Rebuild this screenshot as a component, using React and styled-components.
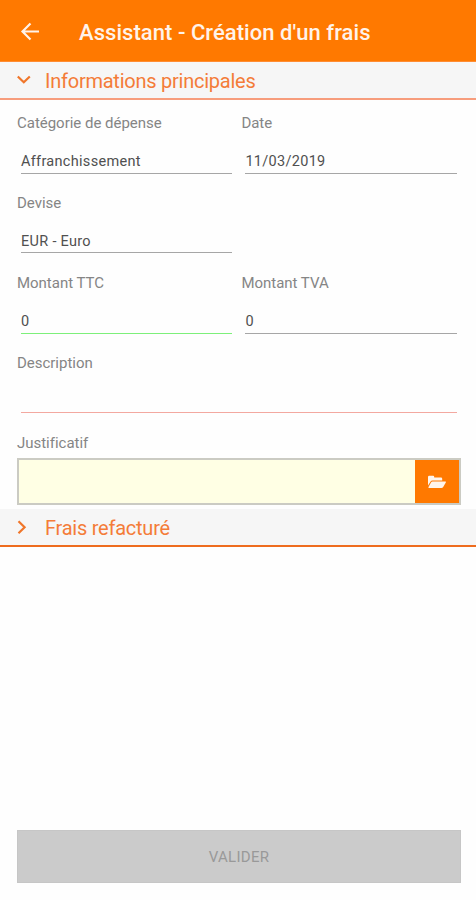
import React, { useState } from 'react'
import styled, { createGlobalStyle } from 'styled-components'

const GlobalStyle = createGlobalStyle`
    * {
        box-sizing: border-box;
    }

    body {
        margin: 0;
        background-color: #fff;
        font-family: Roboto, "Liberation Sans", sans-serif;
    }
`

const Container = styled.div`
    display: flex;
    flex-direction: column;
    height: 900px;
    width: 476px;
    background-color: #fefefe;
`

const Header = styled.header`
    display: flex;
    align-items: center;
    height: 62px;
    padding: 2px 0 0 18px;
    background-color: #ff7900;
    border-bottom: 1px solid #ff8d33;

    & button {
        display: flex;
        width: 24px;
        height: 24px;
        margin-right: 37px;
        padding: 0;
        border: none;
        background-color: transparent;
    }

    h1 {
        margin: 0;
        padding-top: 2px;
        font-size: 22px;
        font-weight: 500;
        line-height: 26px;
        letter-spacing: 0.05px;
        white-space: nowrap;
        color: #fff3ea;
    }
`

const SectionTitle = styled.div`
    display: flex;
    align-items: center;
    height: 38px;
    padding-left: 16px;
    background-color: #f6f6f6;
    border-bottom: 2px solid ${({ $line }) => $line};

    svg {
        flex: none;
        width: 16px;
        height: 16px;
        margin-right: 13px;
    }

    h2 {
        margin: 0;
        padding-top: 2px;
        font-size: 20px;
        font-weight: 400;
        line-height: 24px;
        letter-spacing: -0.24px;
        white-space: nowrap;
        color: #f47c38;
    }
`

const Form = styled.div`
    display: flex;
    flex-direction: column;
    height: 409px;
    padding: 3px 15px 0 17px;
`

const Row = styled.div`
    display: flex;
    height: 80px;
    gap: 9px;
`

const FieldGroup = styled.div`
    width: ${({ $full }) => ($full ? '440px' : '215.4px')};
    padding-top: 10px;
`

const Label = styled.label`
    display: block;
    font-size: 15px;
    line-height: 20px;
    letter-spacing: -0.02px;
    white-space: nowrap;
    color: #858585;
`

const Value = styled.div`
    height: ${({ $short }) => ($short ? '23px' : '24px')};
    margin: 17px 0 0 4px;
    padding-top: 2px;
    border-bottom: 1px solid ${({ $line }) => $line || '#a6a6a6'};
    font-size: 14.5px;
    line-height: 20px;
    letter-spacing: 0.3px;
    white-space: nowrap;
    color: #505050;
`

const FileInput = styled.div`
    display: flex;
    width: 444px;
    height: 47px;
    margin-top: 5px;
    border: 2px solid #cbcbc3;
    background-color: #ffffe4;

    & button {
        display: flex;
        align-items: center;
        justify-content: center;
        width: 44px;
        margin-left: auto;
        padding: 0;
        border: none;
        background-color: #ff7900;
    }
`

const Footer = styled.footer`
    margin-top: auto;
    padding: 0 15px 17px 17px;

    & button {
        display: block;
        width: 444px;
        height: 53px;
        padding: 0;
        border: 1px solid #c6c6c6;
        background-color: #cbcbcb;
        font-family: inherit;
        font-size: 15px;
        letter-spacing: 0.3px;
        color: #999;
    }
`

const ArrowIcon = () => (
    <svg width="24" height="24" viewBox="0 0 24 24" fill="none" stroke="#fff3ea" strokeWidth="2.2">
        <path d="M21 11.5H4.5M12.5 3.5L4.5 11.5L12.5 19.5" />
    </svg>
)

const Caret = ({ open }) => (
    <svg viewBox="0 0 16 16" fill="none" stroke="#f0762a" strokeWidth="2.2">
        <path d={open ? 'M1.8 4.5L7.8 10.3L13.8 4.5' : 'M2.5 2.3L8.6 8.3L2.5 14.3'} />
    </svg>
)

const FolderIcon = () => (
    <svg width="20" height="14" viewBox="0 0 20 14" fill="#fff5eb">
        <path d="M1 10.5V2Q1 .8 2.2 .8H6.2Q7.2 .8 7.2 2V2.5H14Q15.2 2.5 15.2 3.8V5.5H5.5Q4.2 5.5 3.4 6.7Z" />
        <path d="M5.5 6.5H18.4Q19.4 6.5 18.8 7.5L16.2 12Q15.6 13 14.4 13H2Q1 13 1.5 12L4 7.5Q4.5 6.5 5.5 6.5Z" />
    </svg>
)

const App = () => {
    const [mainOpen, setMainOpen] = useState(true)

    return (
        <Container>
            <GlobalStyle />
            <Header>
                <button aria-label="Retour"><ArrowIcon /></button>
                <h1>Assistant - Création d'un frais</h1>
            </Header>

            <SectionTitle $line="#f79d7c" onClick={() => setMainOpen(!mainOpen)}>
                <Caret open={mainOpen} />
                <h2>Informations principales</h2>
            </SectionTitle>

            {mainOpen &&
                <Form>
                    <Row>
                        <FieldGroup>
                            <Label>Catégorie de dépense</Label>
                            <Value>Affranchissement</Value>
                        </FieldGroup>
                        <FieldGroup>
                            <Label>Date</Label>
                            <Value>11/03/2019</Value>
                        </FieldGroup>
                    </Row>
                    <Row>
                        <FieldGroup>
                            <Label>Devise</Label>
                            <Value $short>EUR - Euro</Value>
                        </FieldGroup>
                    </Row>
                    <Row>
                        <FieldGroup>
                            <Label>Montant TTC</Label>
                            <Value $line="#7df07a">0</Value>
                        </FieldGroup>
                        <FieldGroup>
                            <Label>Montant TVA</Label>
                            <Value>0</Value>
                        </FieldGroup>
                    </Row>
                    <Row>
                        <FieldGroup $full>
                            <Label>Description</Label>
                            <Value $short $line="#f3a8a0" />
                        </FieldGroup>
                    </Row>
                    <FieldGroup $full>
                        <Label>Justificatif</Label>
                        <FileInput>
                            <button aria-label="Parcourir"><FolderIcon /></button>
                        </FileInput>
                    </FieldGroup>
                </Form>
            }

            <SectionTitle $line="#ee6c1e">
                <Caret />
                <h2>Frais refacturé</h2>
            </SectionTitle>

            <Footer>
                <button disabled>VALIDER</button>
            </Footer>
        </Container>
    )
}

export default App
